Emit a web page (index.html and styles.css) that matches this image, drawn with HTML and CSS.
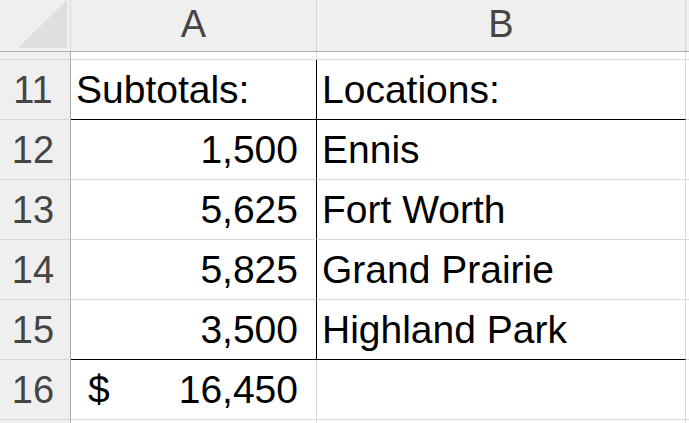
FILE: index.html
```html
<!DOCTYPE html>
<html>
<head>
<meta charset="utf-8">
<link rel="stylesheet" href="styles.css">
</head>
<body>
<div class="sheet">
  <div class="corner"><svg class="tri" width="70" height="51" viewBox="0 0 70 51"><polygon points="18,48 67,0 67,48" fill="#dfdfdf"/></svg></div>
  <div class="colhead">A</div>
  <div class="colhead">B</div>
  <div class="colhead last"></div>

  <div class="rowhead"></div>
  <div class="cell"></div>
  <div class="cell"></div>
  <div class="cell last"></div>

  <div class="rowhead">11</div>
  <div class="cell text bb rb">Subtotals:</div>
  <div class="cell text bb">Locations:</div>
  <div class="cell last"></div>

  <div class="rowhead">12</div>
  <div class="cell num rb">1,500</div>
  <div class="cell text">Ennis</div>
  <div class="cell last"></div>

  <div class="rowhead">13</div>
  <div class="cell num rb">5,625</div>
  <div class="cell text">Fort Worth</div>
  <div class="cell last"></div>

  <div class="rowhead">14</div>
  <div class="cell num rb">5,825</div>
  <div class="cell text">Grand Prairie</div>
  <div class="cell last"></div>

  <div class="rowhead">15</div>
  <div class="cell num bb rb">3,500</div>
  <div class="cell text bb">Highland Park</div>
  <div class="cell last"></div>

  <div class="rowhead">16</div>
  <div class="cell acct"><span>$</span><span>16,450</span></div>
  <div class="cell"></div>
  <div class="cell last"></div>

  <div class="rowhead"></div>
  <div class="cell"></div>
  <div class="cell"></div>
  <div class="cell last"></div>
</div>
</body>
</html>
```
FILE: styles.css
```css
html, body {
  margin: 0;
  padding: 0;
  background: #ffffff;
  overflow: hidden;
}
.sheet {
  display: grid;
  grid-template-columns: 71px 246px 369px 10px;
  grid-template-rows: 52px 8px repeat(6, 60px) 10px;
  width: 689px;
  height: 423px;
  overflow: hidden;
  font-family: "Liberation Sans", Arial, sans-serif;
}
.sheet > div {
  box-sizing: border-box;
  overflow: hidden;
  white-space: nowrap;
}
.corner {
  background: #efefef;
  border-right: 1px solid #dadada;
  border-bottom: 1px solid #ababab;
  position: relative;
}
.tri {
  position: absolute;
  left: 0;
  top: 0;
}
.colhead {
  background: #efefef;
  border-right: 1px solid #d6d6d6;
  border-bottom: 1px solid #ababab;
  color: #454545;
  font-size: 38px;
  line-height: 48px;
  text-align: center;
}
.rowhead {
  background: #efefef;
  border-right: 1px solid #ababab;
  border-bottom: 1px solid #d8d8d8;
  color: #454545;
  font-size: 38px;
  line-height: 58px;
  padding-top: 1px;
  padding-right: 4px;
  text-align: center;
}
.cell {
  background: #ffffff;
  border-right: 1px solid #dadada;
  border-bottom: 1px solid #dadada;
  color: #000000;
  font-size: 39px;
  line-height: 58px;
  padding-top: 1px;
}
.text {
  padding-left: 5px;
}
.num {
  text-align: right;
  padding-right: 18px;
}
.acct {
  display: flex;
  justify-content: space-between;
  padding-left: 17px;
  padding-right: 18px;
}
.bb {
  border-bottom-color: #000000;
}
.rb {
  border-right-color: #000000;
}
```
